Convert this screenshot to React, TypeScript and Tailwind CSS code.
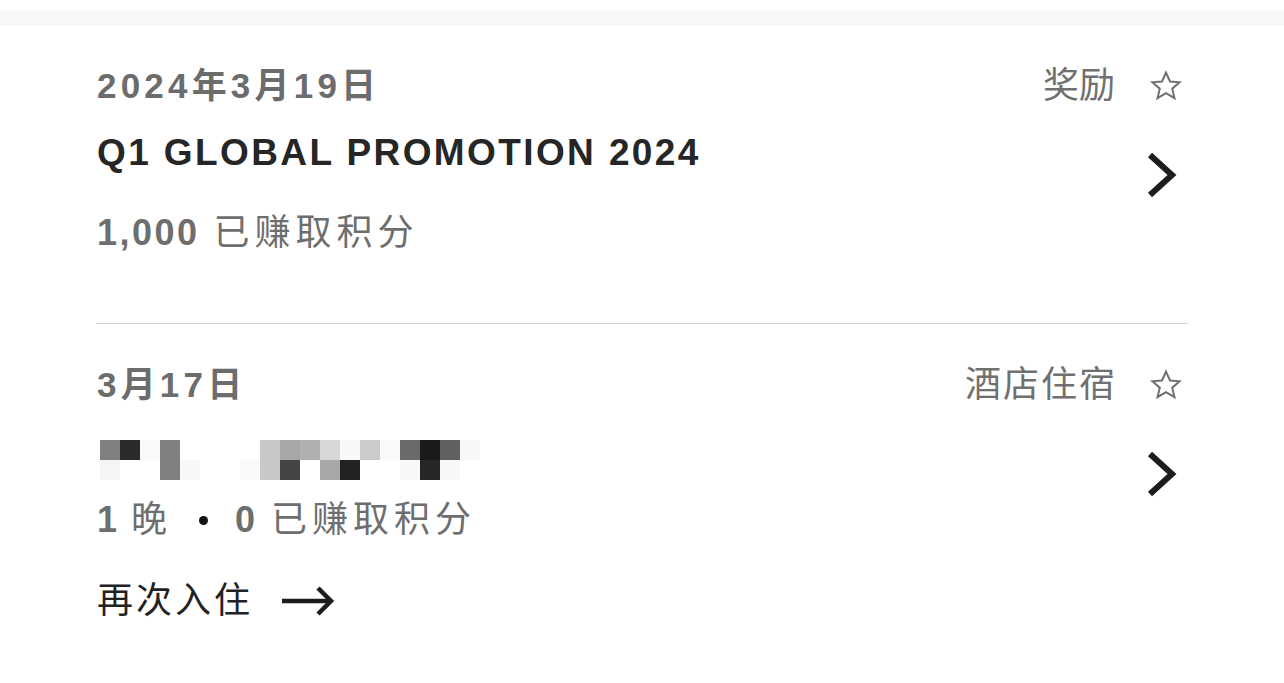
import React from "react";

const Star = () => (
  <svg width="36" height="34" viewBox="0 0 24 24" className="shrink-0">
    <polygon
      points="12,2.5 14.8,8.8 21.6,9.4 16.4,13.9 18,20.6 12,17.1 6,20.6 7.6,13.9 2.4,9.4 9.2,8.8"
      fill="none"
      stroke="#6f6f6f"
      strokeWidth="1.4"
      strokeLinejoin="miter"
    />
  </svg>
);

const Chevron = () => (
  <svg width="32" height="46" viewBox="0 0 32 46" className="shrink-0">
    <polyline
      points="4,3 26,23 4,43"
      fill="none"
      stroke="#1c1c1c"
      strokeWidth="6"
      strokeLinejoin="miter"
      strokeLinecap="butt"
    />
  </svg>
);

const Arrow = () => (
  <svg width="56" height="32" viewBox="0 0 56 32" className="shrink-0">
    <line x1="1" y1="16" x2="50" y2="16" stroke="#1c1c1c" strokeWidth="4.5" />
    <polyline
      points="37,3 50,16 37,29"
      fill="none"
      stroke="#1c1c1c"
      strokeWidth="4.5"
      strokeLinejoin="miter"
    />
  </svg>
);

const row1 = [
  "bg-[#808080]", "bg-[#2a2a2a]", "bg-[#fafafa]", "bg-[#808080]", "bg-white", "bg-white", "bg-white", "bg-white",
  "bg-[#c8c8c8]", "bg-[#a8a8a8]", "bg-[#b0b0b0]", "bg-[#d8d8d8]", "bg-[#f8f8f8]", "bg-[#cbcbcb]", "bg-[#fafafa]",
  "bg-[#6a6a6a]", "bg-[#1a1a1a]", "bg-[#606060]", "bg-[#f8f8f8]",
];
const row2 = [
  "bg-[#f5f5f5]", "bg-white", "bg-white", "bg-[#808080]", "bg-[#f8f8f8]", "bg-white", "bg-white", "bg-[#fafafa]",
  "bg-[#c8c8c8]", "bg-[#444444]", "bg-white", "bg-[#a8a8a8]", "bg-[#222222]", "bg-white", "bg-white",
  "bg-[#f8f8f8]", "bg-[#262626]", "bg-[#f8f8f8]", "bg-white",
];

export default function App() {
  return (
    <div className="w-[1284px] h-[683px] bg-white overflow-hidden font-['Liberation_Sans','Noto_Sans_CJK_SC',sans-serif]">
      <div className="h-[11px]" />
      <div className="h-[15px] bg-[#f7f7f7]" />
      <div className="px-[96px]">
        {/* Item 1 */}
        <div className="flex justify-between pt-[40px] pb-[70px] border-b border-[#cfcfcf]">
          <div className="flex flex-col pl-[1px]">
            <div className="h-[40px] leading-[40px] text-[35px] font-bold tracking-[4.2px] text-[#6c6c6c]">
              2024年3月19日
            </div>
            <div className="mt-[27px] h-[40px] leading-[40px] text-[37px] font-bold tracking-[2.4px] text-[#262626]">
              Q1 GLOBAL PROMOTION 2024
            </div>
            <div className="mt-[40px] h-[40px] leading-[40px] text-[36px] text-[#6e6e6e] flex items-center">
              <span className="font-bold tracking-[2.5px]">1,000</span>
              <span className="ml-[14px] tracking-[5px]">已赚取积分</span>
            </div>
          </div>
          <div className="flex flex-col items-end">
            <div className="flex items-center h-[40px]">
              <span className="text-[36px] leading-[40px] text-[#707070]">奖励</span>
              <span className="ml-[33px] mr-[4px]"><Star /></span>
            </div>
            <div className="mt-[46px] mr-[10px]">
              <Chevron />
            </div>
          </div>
        </div>

        {/* Item 2 */}
        <div className="flex justify-between pt-[41px]">
          <div className="flex flex-col pl-[1px]">
            <div className="h-[40px] leading-[40px] text-[35px] font-bold tracking-[4.2px] text-[#6c6c6c]">
              3月17日
            </div>
            <div className="mt-[35px] ml-[3px] flex flex-col">
              <div className="flex">
                {row1.map((c, i) => (
                  <div key={i} className={`w-[20px] h-[20px] ${c}`} />
                ))}
              </div>
              <div className="flex">
                {row2.map((c, i) => (
                  <div key={i} className={`w-[20px] h-[20px] ${c}`} />
                ))}
              </div>
            </div>
            <div className="mt-[20px] h-[40px] leading-[40px] text-[36px] text-[#6e6e6e] flex items-center">
              <span className="font-bold">1</span>
              <span className="ml-[14px]">晚</span>
              <span className="ml-[32px] w-[9px] h-[9px] rounded-full bg-[#111]" />
              <span className="ml-[27px] font-bold">0</span>
              <span className="ml-[16px] tracking-[5px]">已赚取积分</span>
            </div>
            <div className="mt-[41px] h-[40px] flex items-center">
              <span className="text-[36px] leading-[40px] text-[#222] tracking-[3px]">再次入住</span>
              <span className="ml-[28px]"><Arrow /></span>
            </div>
          </div>
          <div className="flex flex-col items-end">
            <div className="flex items-center h-[40px]">
              <span className="text-[36px] leading-[40px] text-[#707070] tracking-[2px]">酒店住宿</span>
              <span className="ml-[31px] mr-[4px]"><Star /></span>
            </div>
            <div className="mt-[46px] mr-[10px]">
              <Chevron />
            </div>
          </div>
        </div>
      </div>
    </div>
  );
}
